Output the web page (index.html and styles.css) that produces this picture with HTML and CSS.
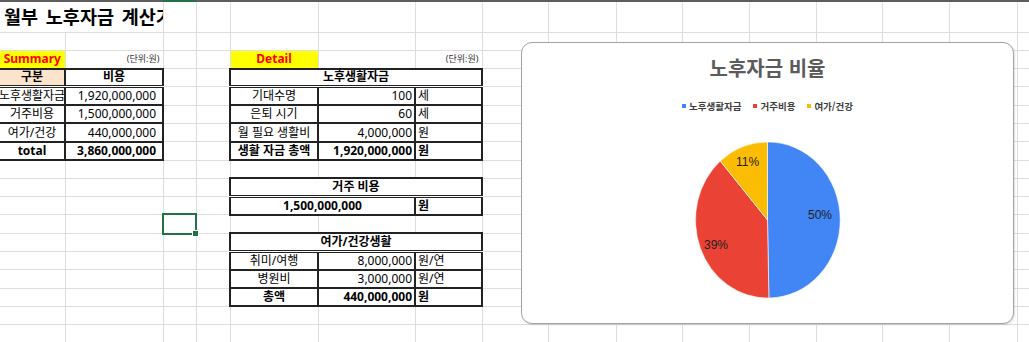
FILE: index.html
```html
<!DOCTYPE html>
<html lang="ko">
<head>
<meta charset="utf-8">
<title>월부 노후자금 계산기</title>
<link rel="stylesheet" href="styles.css">
</head>
<body>
<div class="sheet-wrap">
  <table class="sheet">
    <colgroup>
      <col class="c-a"><col class="c-b"><col class="c-c"><col class="c-d"><col class="c-e"><col class="c-f"><col class="c-g"><col class="c-h">
      <col class="c-i"><col class="c-j"><col class="c-k"><col class="c-l"><col class="c-m"><col class="c-n"><col class="c-o"><col class="c-p">
    </colgroup>
    <tr class="colbar"><td></td><td></td><td class="on"></td><td></td><td></td><td></td><td></td><td></td><td></td><td></td><td></td><td></td><td></td><td></td><td></td><td></td></tr>
    <tr class="r-title"><td colspan="2" class="title">월부 노후자금 계산기</td><td></td><td></td><td></td><td></td><td></td><td></td><td></td><td></td><td></td><td></td><td></td><td></td><td></td><td></td></tr>
    <tr><td></td><td></td><td></td><td></td><td></td><td></td><td></td><td></td><td></td><td></td><td></td><td></td><td></td><td></td><td></td><td></td></tr>
    <tr><td class="tag">Summary</td><td class="unit">(단위:원)</td><td></td><td></td><td class="tag">Detail</td><td></td><td class="unit">(단위:원)</td><td></td><td></td><td></td><td></td><td></td><td></td><td></td><td></td><td></td></tr>
    <tr><td class="bx dbl ctr bold peach">구분</td><td class="bx dbl ctr bold">비용</td><td></td><td></td><td colspan="3" class="bx dbl ctr bold">노후생활자금</td><td></td><td></td><td></td><td></td><td></td><td></td><td></td><td></td><td></td></tr>
    <tr><td class="bx flush"><div class="spill">노후생활자금</div></td><td class="bx num">1,920,000,000</td><td></td><td></td><td class="bx ctr">기대수명</td><td class="bx rt">100</td><td class="bx lt">세</td><td></td><td></td><td></td><td></td><td></td><td></td><td></td><td></td><td></td></tr>
    <tr><td class="bx ctr">거주비용</td><td class="bx num">1,500,000,000</td><td></td><td></td><td class="bx ctr">은퇴 시기</td><td class="bx rt">60</td><td class="bx lt">세</td><td></td><td></td><td></td><td></td><td></td><td></td><td></td><td></td><td></td></tr>
    <tr><td class="bx ctr">여가/건강</td><td class="bx num">440,000,000</td><td></td><td></td><td class="bx ctr">월 필요 생활비</td><td class="bx rt">4,000,000</td><td class="bx lt">원</td><td></td><td></td><td></td><td></td><td></td><td></td><td></td><td></td><td></td></tr>
    <tr><td class="bx ctr bold">total</td><td class="bx num bold">3,860,000,000</td><td></td><td></td><td class="bx ctr bold">생활 자금 총액</td><td class="bx rt bold">1,920,000,000</td><td class="bx lt bold">원</td><td></td><td></td><td></td><td></td><td></td><td></td><td></td><td></td><td></td></tr>
    <tr><td></td><td></td><td></td><td></td><td></td><td></td><td></td><td></td><td></td><td></td><td></td><td></td><td></td><td></td><td></td><td></td></tr>
    <tr><td></td><td></td><td></td><td></td><td colspan="3" class="bx dbl ctr bold">거주 비용</td><td></td><td></td><td></td><td></td><td></td><td></td><td></td><td></td><td></td></tr>
    <tr><td></td><td></td><td></td><td></td><td colspan="2" class="bx ctr bold">1,500,000,000</td><td class="bx lt bold">원</td><td></td><td></td><td></td><td></td><td></td><td></td><td></td><td></td><td></td></tr>
    <tr><td></td><td></td><td class="sel"></td><td></td><td></td><td></td><td></td><td></td><td></td><td></td><td></td><td></td><td></td><td></td><td></td><td></td></tr>
    <tr><td></td><td></td><td></td><td></td><td colspan="3" class="bx dbl ctr bold">여가/건강생활</td><td></td><td></td><td></td><td></td><td></td><td></td><td></td><td></td><td></td></tr>
    <tr><td></td><td></td><td></td><td></td><td class="bx ctr">취미/여행</td><td class="bx rt">8,000,000</td><td class="bx lt">원/연</td><td></td><td></td><td></td><td></td><td></td><td></td><td></td><td></td><td></td></tr>
    <tr><td></td><td></td><td></td><td></td><td class="bx ctr">병원비</td><td class="bx rt">3,000,000</td><td class="bx lt">원/연</td><td></td><td></td><td></td><td></td><td></td><td></td><td></td><td></td><td></td></tr>
    <tr><td></td><td></td><td></td><td></td><td class="bx ctr bold">총액</td><td class="bx rt bold">440,000,000</td><td class="bx lt bold">원</td><td></td><td></td><td></td><td></td><td></td><td></td><td></td><td></td><td></td></tr>
    <tr><td></td><td></td><td></td><td></td><td></td><td></td><td></td><td></td><td></td><td></td><td></td><td></td><td></td><td></td><td></td><td></td></tr>
    <tr><td></td><td></td><td></td><td></td><td></td><td></td><td></td><td></td><td></td><td></td><td></td><td></td><td></td><td></td><td></td><td></td></tr>
  </table>

  <div class="chart">
    <div class="chart-title">노후자금 비율</div>
    <div class="legend">
      <span class="legend-item"><i class="swatch sw-blue"></i>노후생활자금</span>
      <span class="legend-item"><i class="swatch sw-red"></i>거주비용</span>
      <span class="legend-item"><i class="swatch sw-yellow"></i>여가/건강</span>
    </div>
    <svg class="pie" viewBox="0 0 491 200" width="491" height="200">
      <path class="slice-blue" d="M245.5 106 L245.5 28 A72 78 0 0 1 246.9 184 Z"/>
      <path class="slice-red" d="M245.5 106 L246.9 184 A72 78 0 0 1 198.3 47.1 Z"/>
      <path class="slice-yellow" d="M245.5 106 L198.3 47.1 A72 78 0 0 1 245.5 28 Z"/>
      <text class="pie-label" x="298" y="101">50%</text>
      <text class="pie-label" x="194" y="131">39%</text>
      <text class="pie-label" x="225.5" y="48">11%</text>
    </svg>
  </div>
</div>
</body>
</html>
```

FILE: styles.css
```css
html, body {
  margin: 0;
  padding: 0;
  background: #fff;
}

body {
  width: 1029px;
  height: 342px;
  overflow: hidden;
}

.sheet-wrap {
  position: relative;
  width: 1029px;
  height: 342px;
  overflow: hidden;
  font-family: "Noto Sans", "Noto Sans CJK KR", sans-serif;
  font-size: 12px;
  color: #000;
}

.sheet {
  border-collapse: collapse;
  table-layout: fixed;
  width: 1084px;
}

.c-a { width: 65px; }
.c-b { width: 98px; }
.c-c { width: 33px; }
.c-d { width: 34px; }
.c-e { width: 88px; }
.c-f { width: 97px; }
.c-g { width: 67px; }
.c-h { width: 66px; }
.c-i { width: 68px; }
.c-j { width: 66px; }
.c-k { width: 67px; }
.c-l { width: 67px; }
.c-m { width: 66px; }
.c-n { width: 67px; }
.c-o { width: 68px; }
.c-p { width: 67px; }

.sheet tr {
  height: 18.3px;
}

.sheet td {
  border: 1px solid #dedede;
  padding: 0 2px;
  line-height: 14px;
  white-space: nowrap;
  overflow: hidden;
  vertical-align: middle;
}

.sheet tr.colbar {
  height: 2px;
}

.sheet tr.colbar td {
  border: 0;
  padding: 0;
  line-height: 0;
  height: 2px;
  background: #5d5d5d;
}

.sheet tr.colbar td.on {
  background: #217346;
}

.sheet tr.r-title {
  height: 30px;
}

.sheet tr.r-title td {
  border-top: 0;
}

.sheet td.title {
  font-size: 18.5px;
  font-weight: 700;
  word-spacing: 3px;
  padding-left: 4px;
  padding-right: 0;
  line-height: 24px;
}

.sheet td.tag {
  background: #ffff00;
  color: #ff0000;
  font-weight: 700;
  text-align: center;
  font-size: 12px;
}

.sheet td.unit {
  font-size: 9px;
  text-align: right;
  color: #333;
  padding-right: 3px;
}

.sheet td.bx {
  border: 2px solid #222;
}

.sheet td.dbl {
  border-bottom: 3px double #222;
}

.sheet tr > td:first-child {
  border-left: 0;
}

.peach {
  background: #fce4cc;
}

.ctr { text-align: center; }

.sheet td.rt {
  text-align: right;
  padding-right: 2px;
}

.sheet td.lt {
  text-align: left;
  padding-left: 2px;
}

.sheet td.num {
  text-align: right;
  padding-right: 6px;
}

.bold { font-weight: 700; }

.sheet td.flush {
  padding: 0;
}

.spill {
  display: flex;
  justify-content: center;
  overflow: hidden;
}

.sheet td.sel {
  position: relative;
  overflow: visible;
}

.sheet td.sel::before {
  content: "";
  position: absolute;
  left: -2px;
  top: -2px;
  right: -1px;
  bottom: -2px;
  border: 2px solid #217346;
}

.sheet td.sel::after {
  content: "";
  position: absolute;
  right: -3px;
  bottom: -4px;
  width: 5px;
  height: 5px;
  background: #217346;
  border: 1px solid #fff;
}

/* chart */
.chart {
  position: absolute;
  left: 521px;
  top: 42px;
  width: 493px;
  height: 282px;
  box-sizing: border-box;
  border: 1px solid #a3a3a3;
  border-radius: 11px;
  background: #fff;
  box-shadow: 1px 1px 2px rgba(0, 0, 0, 0.12);
  display: flex;
  flex-direction: column;
  align-items: center;
  font-family: "Noto Sans CJK KR", sans-serif;
}

.chart-title {
  margin-top: 11px;
  font-size: 20px;
  line-height: 28px;
  font-weight: 700;
  color: #5b5b5b;
}

.legend {
  margin-top: 16px;
  display: flex;
  gap: 12px;
  font-size: 9.5px;
  line-height: 16px;
  font-weight: 700;
  color: #3c3c3c;
}

.legend-item {
  display: flex;
  align-items: center;
  gap: 3px;
}

.swatch {
  display: block;
  width: 4px;
  height: 4px;
}

.sw-blue { background: #4285f4; }
.sw-red { background: #ea4335; }
.sw-yellow { background: #fbbc04; }

.pie {
  display: block;
  width: 491px;
  height: 200px;
}

.slice-blue { fill: #4285f4; stroke: #fff; stroke-width: 0.6; }
.slice-red { fill: #ea4335; stroke: #fff; stroke-width: 0.6; }
.slice-yellow { fill: #fbbc04; stroke: #fff; stroke-width: 0.6; }

.pie-label {
  font-family: "Liberation Sans", Arial, sans-serif;
  font-size: 12px;
  fill: #1f1f1f;
  text-anchor: middle;
  dominant-baseline: central;
}
```
